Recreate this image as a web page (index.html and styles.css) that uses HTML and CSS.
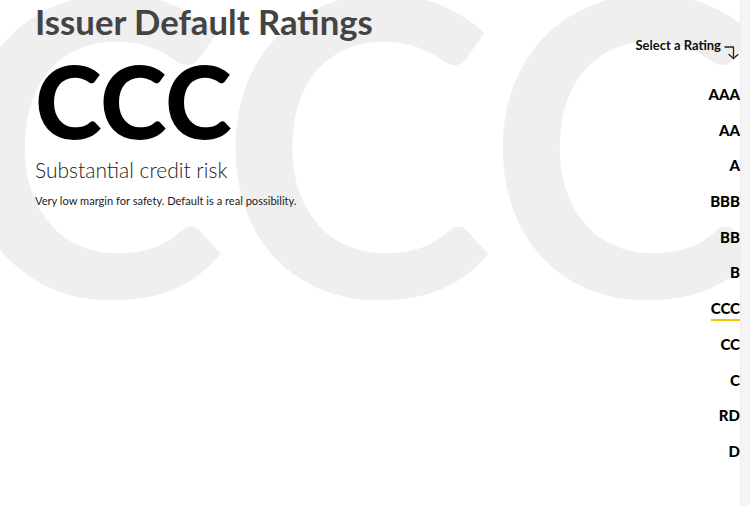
FILE: index.html
```html
<!DOCTYPE html>
<html lang="en">
<head>
<meta charset="utf-8">
<title>Issuer Default Ratings</title>
<link rel="stylesheet" href="styles.css">
</head>
<body>
<div class="page">
  <div class="backdrop" aria-hidden="true">CCC</div>
  <main class="detail">
    <h1 class="title">Issuer Default Ratings</h1>
    <div class="grade">CCC</div>
    <h2 class="summary">Substantial credit risk</h2>
    <p class="desc">Very low margin for safety. Default is a real possibility.</p>
  </main>
  <nav class="picker">
    <div class="picker-label">Select a Rating
      <svg class="arrow" width="16" height="16" viewBox="0 0 16 16" fill="none" stroke="#222" stroke-width="1.3" stroke-linecap="round" stroke-linejoin="round">
        <path d="M1 3 H9.5 V14.5"/>
        <path d="M5 10.5 L9.5 14.5 L14 10.5"/>
      </svg>
    </div>
    <ul class="ratings">
      <li>AAA</li>
      <li>AA</li>
      <li>A</li>
      <li>BBB</li>
      <li>BB</li>
      <li>B</li>
      <li class="active"><span>CCC</span></li>
      <li>CC</li>
      <li>C</li>
      <li>RD</li>
      <li>D</li>
    </ul>
  </nav>
  <div class="scrolltrack"></div>
</div>
</body>
</html>
```

FILE: styles.css
```css
html, body {
  margin: 0;
  padding: 0;
  background: #fff;
}

body {
  font-family: Lato, "Open Sans", "Liberation Sans", sans-serif;
  color: #111;
  overflow: hidden;
}

.page {
  position: relative;
  display: flex;
  width: 750px;
  height: 506px;
  overflow: hidden;
}

.backdrop {
  position: absolute;
  left: -48px;
  top: -70px;
  font-size: 414px;
  line-height: 1;
  font-weight: 700;
  color: #efefef;
  white-space: nowrap;
  z-index: 0;
  pointer-events: none;
}

.detail {
  position: relative;
  z-index: 1;
  flex: 1;
  padding-left: 35px;
}

.title {
  margin: 0;
  font-size: 34.7px;
  line-height: 1.2;
  font-weight: 700;
  color: #444;
  padding-top: 1px;
}

.grade {
  margin-top: 7px;
  font-size: 101px;
  line-height: 1;
  font-weight: 900;
  color: #000;
}

.summary {
  margin: 6px 0 0;
  font-size: 21px;
  line-height: 1.2;
  font-weight: 300;
  color: #222;
}

.desc {
  margin: 12px 0 0;
  font-size: 11.1px;
  line-height: 1.2;
  color: #222;
}

.picker {
  position: relative;
  z-index: 1;
  padding-top: 38px;
  padding-right: 0;
  text-align: right;
}

.picker-label {
  display: flex;
  align-items: flex-start;
  justify-content: flex-end;
  gap: 3px;
  font-size: 13px;
  line-height: 1.2;
  font-weight: 700;
  color: #111;
}

.arrow {
  margin-top: 6px;
}

.ratings {
  list-style: none;
  margin: 17px 0 0;
  padding: 0;
}

.ratings li {
  height: 35.7px;
  line-height: 35.7px;
  font-size: 15px;
  font-weight: 900;
  color: #000;
}

.ratings .active span {
  display: inline-block;
  line-height: 1;
  padding-bottom: 3px;
  border-bottom: 2px solid #f5c400;
}

.scrolltrack {
  position: relative;
  z-index: 1;
  width: 9px;
  flex: none;
  background: #f5f5f5;
  border-left: 1px solid #ececec;
}
```
